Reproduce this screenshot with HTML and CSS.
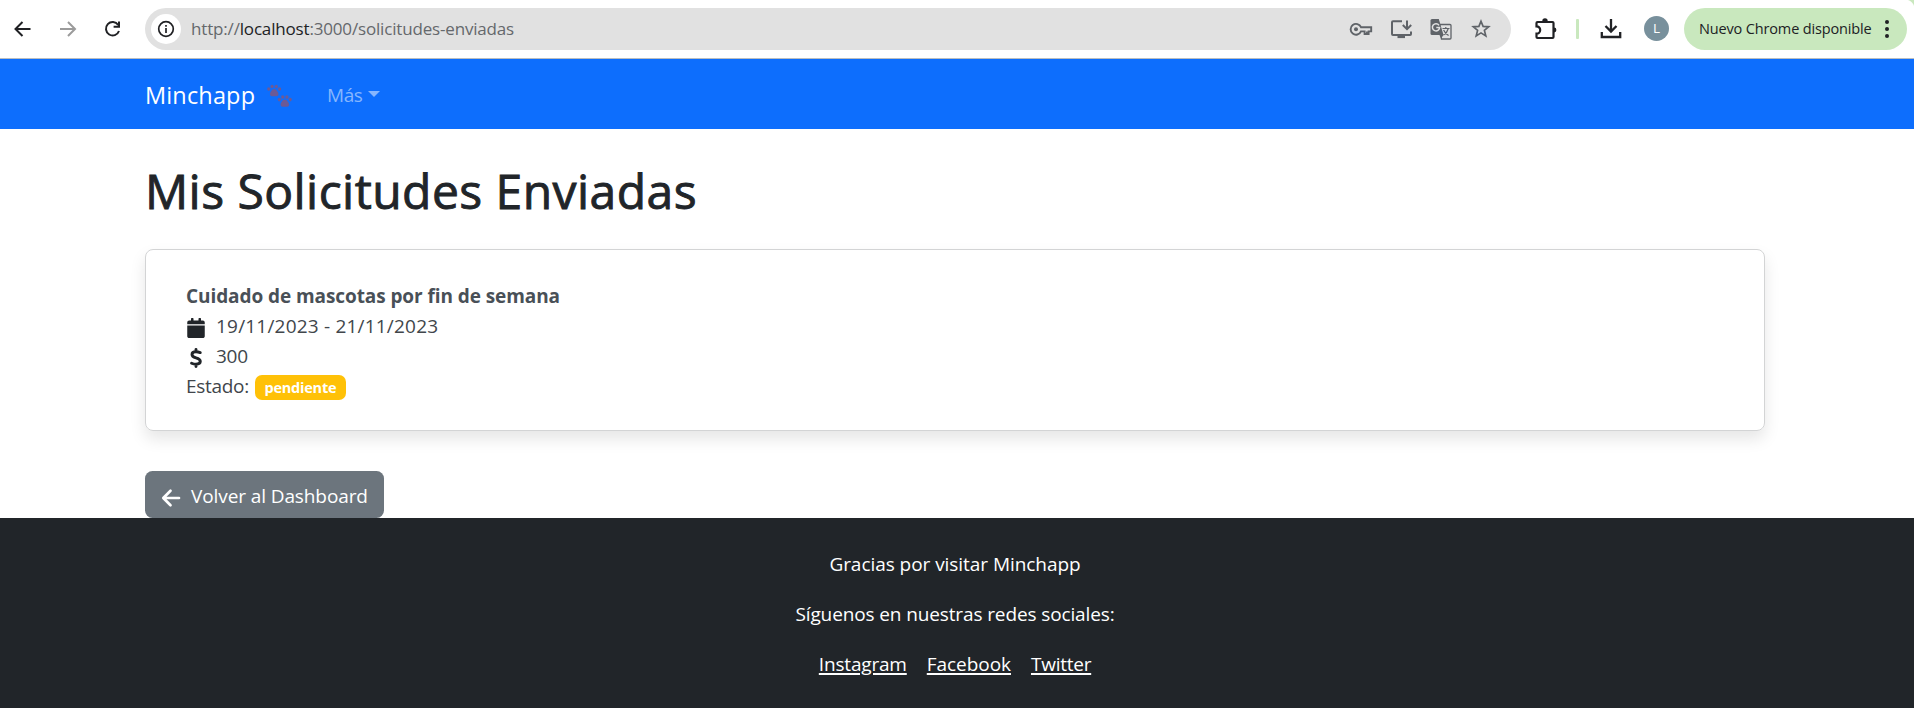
FILE: index.html
```
<!DOCTYPE html>
<html lang="es">
<head>
<meta charset="utf-8">
<title>Minchapp</title>
<link rel="stylesheet" href="styles.css">
</head>
<body>
<header class="browser">
  <div class="navkeys">
    <span class="key"><svg width="24" height="24" viewBox="0 0 24 24" fill="none" stroke="#202124" stroke-width="2"><path d="M19.500 12H5.500M11.500 5l-7 7 7 7"/></svg></span>
    <span class="key"><svg width="24" height="24" viewBox="0 0 24 24" fill="none" stroke="#9b9b9b" stroke-width="2"><path d="M4 12h14M12 5l7 7-7 7"/></svg></span>
    <span class="key"><svg width="24" height="24" viewBox="0 0 24 24" fill="none" stroke="#202124" stroke-width="2"><path d="M17.200 8A6.700 6.700 0 1 0 18 14M18 4.500v5.300h-5.400"/></svg></span>
  </div>
  <div class="omnibox">
    <span class="info"><svg width="20" height="20" viewBox="0 0 20 20" fill="none" stroke="#202124" stroke-width="1.7"><circle cx="10" cy="10" r="7.3"/><path d="M10 9v5M10 6v1.8"/></svg></span>
    <span class="url">http://<b>localhost</b>:3000/solicitudes-enviadas</span>
    <span class="cell"><svg width="24" height="24" viewBox="0 0 24 24" fill="none" stroke="#5f6368" stroke-width="1.9"><path d="M12 10.2a5.4 5.4 0 1 0 0 4.2h3.6V17h4v-2.6h2.600v-4.200z"/><path d="M18 14.500v2"/><circle cx="7" cy="12.300" r="2" fill="#5f6368" stroke="none"/></svg></span>
    <span class="cell"><svg width="24" height="24" viewBox="0 0 24 24" fill="none" stroke="#5f6368" stroke-width="2"><path d="M13 4.200H4q-1 0-1 1V17q0 1 1 1h17q1 0 1-1v-2.500M18 3.500v8M13.800 8l4.200 4.200L22.200 8"/><path d="M8.500 19.800h7.500" stroke-width="2.600"/></svg></span>
    <span class="cell"><svg width="24" height="24" viewBox="0 0 24 24"><path d="M10.500 7.500h10.500q1 0 1 1v12.500q0 1-1 1h-8.500z" fill="none" stroke="#5f6368" stroke-width="1.300"/><path d="M3 2h6.800l4.700 16H3q-1.500 0-1.500-1.500v-13Q1.500 2 3 2z" fill="#5f6368"/><path d="M10.500 18h4l-2.500 3.500z" fill="#5f6368"/><path d="M10 8.300A3.600 3.600 0 1 0 10.600 10.500H7.300" fill="none" stroke="#e1e1e1" stroke-width="1.500"/><path d="M13.500 11.500h7M16.800 10v1.500M19.300 11.500q-1 4-4.800 6.500M14.600 13q1.500 3.500 5 5.500" fill="none" stroke="#5f6368" stroke-width="1.200"/></svg></span>
    <span class="cell"><svg width="24" height="24" viewBox="0 0 24 24" fill="none" stroke="#5f6368" stroke-width="1.700"><path d="M12 4.200l2.100 5.200 5.600.4-4.300 3.600 1.400 5.500-4.800-3-4.800 3 1.400-5.500-4.300-3.600 5.600-.4z"/></svg></span>
  </div>
  <span class="ext"><svg width="26" height="26" viewBox="0 0 26 26"><path d="M5.500 6h15q1 0 1 1v14q0 1-1 1h-15q-1 0-1-1v-3.300a3.700 3.700 0 0 0 0-7.400V7q0-1 1-1z" fill="none" stroke="#202124" stroke-width="2.200"/><path d="M10.300 5a2.700 2.700 0 0 1 5.400 0zM22 11.600a2.400 2.400 0 0 1 0 4.800z" fill="#202124"/></svg></span>
  <span class="sep"></span>
  <span class="dl"><svg width="26" height="26" viewBox="0 0 26 26" fill="none" stroke="#202124" stroke-width="2.300"><path d="M13 3v12M7.500 10l5.500 5.500 5.500-5.500M3.800 16v5h18.400v-5"/></svg></span>
  <span class="avatar">L</span>
  <div class="update"><span>Nuevo Chrome disponible</span><svg width="6" height="20" viewBox="0 0 6 20" fill="#202124"><circle cx="3" cy="3" r="2"/><circle cx="3" cy="10" r="2"/><circle cx="3" cy="17" r="2"/></svg></div>
</header>
<nav class="navbar">
  <span class="brand">Minchapp</span>
  <svg class="paws" width="26" height="24" viewBox="0 0 26 24" fill="#6c5a96"><g id="paw"><path d="M3 10.200q0-2 1.300-3.200Q5 5 7.200 5T10 7q1.500 1.200 1.500 3.200Q11.500 12.200 9.500 12.200H5Q3 12.200 3 10.200z"/><ellipse cx="1.700" cy="5" rx="1.600" ry="1.800"/><ellipse cx="5.100" cy="2.500" rx="1.600" ry="1.800"/><ellipse cx="9.300" cy="2.500" rx="1.600" ry="1.800"/><ellipse cx="12.600" cy="5" rx="1.600" ry="1.800"/></g><use href="#paw" x="10.600" y="10.600"/></svg>
  <span class="more">Más</span><span class="caret"></span>
</nav>
<main class="content">
  <h1>Mis Solicitudes Enviadas</h1>
  <section class="card">
    <div class="line title">Cuidado de mascotas por fin de semana</div>
    <div class="line"><span class="ico"><svg width="18" height="20" viewBox="0 0 448 512" fill="#212529"><path d="M0 464c0 26.500 21.500 48 48 48h352c26.500 0 48-21.500 48-48V192H0v272zm448-352c0-26.500-21.500-48-48-48h-48V16c0-8.800-7.200-16-16-16h-32c-8.800 0-16 7.200-16 16v48H160V16c0-8.800-7.200-16-16-16h-32c-8.800 0-16 7.200-16 16v48H48c-26.500 0-48 21.500-48 48v48h448v-48z"/></svg></span><span class="date">19/11/2023 - 21/11/2023</span></div>
    <div class="line"><span class="ico"><svg width="12" height="20" viewBox="0 0 12 20" fill="none" stroke="#212529" stroke-width="2.900" stroke-linecap="round"><path d="M6 1.500v2M6 16.500v2M10.200 4.600Q8.200 3.800 6 3.800 2 3.800 2 6.500 2 8.800 6 9.800q4.300 1.100 4.300 3.500 0 2.900-4.300 2.900-2.300 0-4.400-1"/></svg></span><span class="price">300</span></div>
    <div class="line"><span class="state">Estado:</span><span class="badge">pendiente</span></div>
  </section>
  <a class="back"><svg width="20" height="20" viewBox="0 0 20 20" fill="none" stroke="#fff" stroke-width="2.700" stroke-linecap="round" stroke-linejoin="round"><path d="M18 10H2.800M9.500 2.800L2.300 10l7.200 7.200"/></svg><span>Volver al Dashboard</span></a>
</main>
<footer class="footer">
  <p class="thanks">Gracias por visitar Minchapp</p>
  <p class="follow">Síguenos en nuestras redes sociales:</p>
  <p class="links"><a class="ig">Instagram</a><a class="fb">Facebook</a><a class="tw">Twitter</a></p>
</footer>
</body>
</html>
```
FILE: styles.css
```
* { box-sizing: border-box; }
body { margin: 0; background: #fff; color: #212529; font: 19px/30px "Open Sans", "Noto Sans", sans-serif; }
svg { display: block; flex: none; }

.browser { display: flex; align-items: center; height: 59px; padding: 0 7px 1px 0; border-bottom: 1px solid #b9bdc0; background: radial-gradient(circle at 0 100%, transparent 9px, #c9e8be 10px) right top / 9px 9px no-repeat #fff; }
.navkeys { display: flex; width: 135px; }
.key { display: flex; justify-content: center; width: 45px; }
.omnibox { display: flex; align-items: center; width: 1366px; height: 42px; margin-left: 10px; padding: 0 10px 0 6px; border-radius: 21px; background: #e1e1e1; }
.info { display: flex; align-items: center; justify-content: center; width: 30px; height: 30px; border-radius: 50%; background: #fff; }
.url { flex: 1; margin-left: 10px; padding-top: 1px; font-size: 17px; letter-spacing: -0.17px; color: #65686c; white-space: nowrap; }
.url b { font-weight: 400; color: #202124; }
.cell { display: flex; justify-content: center; width: 40px; }
.ext, .dl { display: flex; justify-content: center; width: 40px; }
.ext { margin-left: 14px; }
.sep { width: 3px; height: 20px; margin: 0 12px 0 11px; border-radius: 1px; background: #c9e8be; }
.avatar { width: 25px; height: 25px; margin: 0 15px 0 13px; border-radius: 50%; background: #78909c; color: #fff; font-size: 13.5px; line-height: 25px; text-align: center; }
.update { display: flex; align-items: center; justify-content: space-between; width: 223px; height: 42px; padding: 0 17px 0 15px; border-radius: 21px; background: #c9e8be; color: #202124; font-size: 14.5px; letter-spacing: -0.15px; white-space: nowrap; }

.navbar { display: flex; align-items: center; height: 70px; padding: 0 145px; background: #0d6efd; color: #fff; }
.brand { width: 122px; padding-top: 1px; font-size: 23.5px; letter-spacing: 0.15px; }
.paws { margin-top: 3px; }
.more { margin-left: 34px; padding-top: 1px; letter-spacing: -0.4px; color: #86b6fe; }
.caret { margin: -1px 0 0 5px; border: 6px solid transparent; border-top-color: #86b6fe; border-bottom: 0; }

.content { padding: 30px 149px 0 145px; }
h1 { height: 60px; margin: 0 0 30px; padding-top: 2px; font-size: 48px; font-weight: 500; line-height: 60px; letter-spacing: 0.45px; -webkit-text-stroke: 0.9px #212529; }
.card { height: 182px; margin-bottom: 40px; padding: 31px 40px 29px; border: 1px solid #d3d4d5; border-radius: 8px; box-shadow: 0 8px 16px rgba(0, 0, 0, 0.1); }
.line { display: flex; align-items: center; height: 30px; color: #41464b; }
.title { font-weight: 700; letter-spacing: -0.08px; color: #495057; }
.ico { display: flex; justify-content: center; width: 20px; margin: 3px 10px 0 0; }
.date { letter-spacing: 0.2px; }
.price { letter-spacing: -0.3px; }
.state { width: 69px; letter-spacing: -0.3px; }
.badge { height: 25px; margin-top: 2px; padding: 0 9.5px; border-radius: 7px; background: #ffc107; color: #fff; font-size: 14.5px; font-weight: 700; line-height: 25px; letter-spacing: -0.22px; }
.back { display: flex; align-items: center; width: 239px; height: 47px; padding: 0 15px; border-radius: 7.5px; background: #6c757d; color: #fff; white-space: nowrap; }
.back svg { margin: 6px 10px 0 1px; }
.back span { padding-top: 2px; letter-spacing: -0.1px; }

.footer { height: 190px; padding: 31px 4px 29px 0; background: #212529; color: #fff; text-align: center; }
.footer p { height: 30px; margin: 0 0 20px; }
.thanks { letter-spacing: -0.05px; }
.follow { letter-spacing: -0.12px; }
.links { display: flex; justify-content: center; gap: 20px; }
.links a { text-decoration: underline; text-decoration-thickness: 2px; text-underline-offset: 2px; }
.ig { letter-spacing: -0.18px; }
.fb { letter-spacing: -0.05px; }
.tw { letter-spacing: -0.25px; }
```
